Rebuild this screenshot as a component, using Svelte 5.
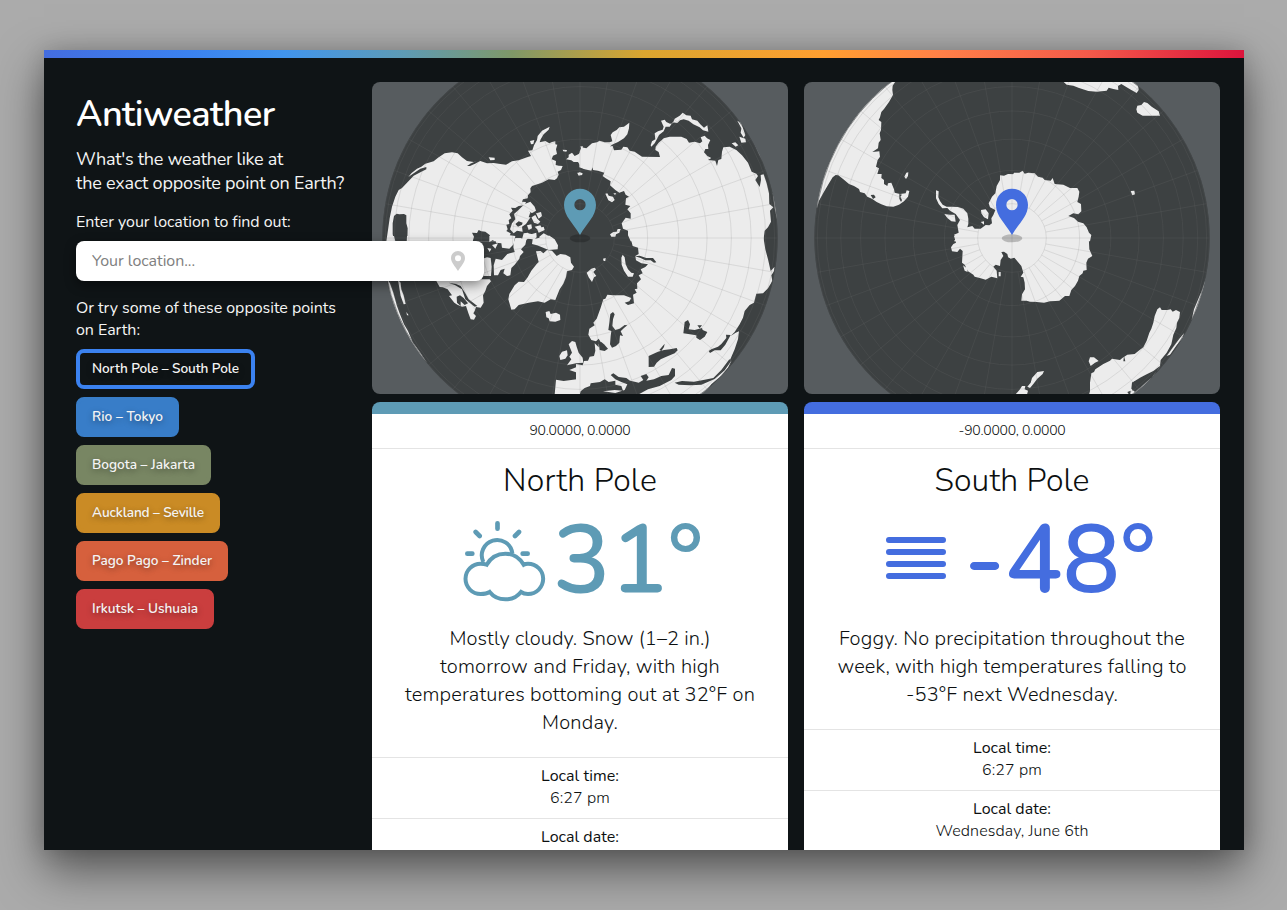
<script>
  const pairs = [
    { label: 'North Pole – South Pole', color: '#3b82f0', width: 147, active: true },
    { label: 'Rio – Tokyo', color: '#387dc8', width: 71 },
    { label: 'Bogota – Jakarta', color: '#788663', width: 103 },
    { label: 'Auckland – Seville', color: '#ca8b25', width: 112 },
    { label: 'Pago Pago – Zinder', color: '#d6603d', width: 120 },
    { label: 'Irkutsk – Ushuaia', color: '#ca3e3e', width: 106 }
  ];

  // Each quadrant is drawn in its own 3x coordinate frame, then moved into place.
  const frames = { nw: [0, -6], ne: [618, -6], sw: [0, 462], se: [618, 462] };

  const north = {
    nw: {
      land: [
        'M43 484L48 450 53 415 60 380 70 350 80 330 90 324 110 303 125 287 148 275 163 268 163 261 145 266 125 280 109 291 118 280 135 266 148 260 160 251 185 244 198 233 218 220 240 217 257 220 270 232 285 243 305 246 325 243 345 250 365 249 385 252 402 254 420 244 440 241 465 232 477 228 468 212 481 211 486 196 495 180 497 168 510 152 533 140 530 149 515 163 506 178 503 187 520 183 532 190 540 186 550 184 550 193 556 194 552 208 555 222 543 227 539 238 552 243 551 255 560 257 572 258 567 270 557 275 560 284 555 295 548 300 530 298 510 308 480 318 475 325 476 337 468 346 467 355 453 358 450 365 462 366 458 376 440 378 430 384 417 383 422 392 412 403 418 415 410 420 412 432 403 434 407 448 403 453 416 460 412 470 400 484Z',
        'M458 372L475 365 488 380 492 392 480 400 472 394 480 405 470 420 462 432 450 440 452 455 435 452 425 460 414 448 420 430 430 418 426 402 437 392Z',
        'M492 400L507 396 510 408 500 416ZM478 412L490 405 496 416 505 425 498 432 486 428ZM465 436L478 433 480 445 470 450ZM488 440L505 436 510 445 500 452ZM455 460L468 458 475 470 460 482 450 478ZM480 462L493 458 494 472 484 480ZM502 470L515 460 530 468 543 475 540 484 505 484ZM495 446L515 440 518 450 500 458Z',
        'M350 232L368 233 368 240 355 241ZM474 183L487 180 484 192 477 193ZM572 209L585 210 583 215 574 214ZM582 238L590 232 590 224 600 218 608 228 620 222 628 212 636 208 636 266 628 262 618 246 605 246 598 241ZM616 282L622 277 632 280 630 286ZM624 200L632 198 632 208Z'
      ],
      water: [
        'M62 430L66 408 74 401 82 403 96 402 103 406 103 430 107 445 106 484 66 484 62 462Z',
        'M302 484L306 470 300 458 315 459 320 450 328 454 340 455 352 464 360 476 366 484Z',
        'M285 258L298 250 325 238 328 241 312 250 294 258Z',
        'M430 432L440 424 452 428 450 434 438 440ZM420 470L440 462 444 468 430 484ZM474 400L484 398 480 412 470 412Z'
      ]
    },
    ne: {
      land: [
        'M4 236L5 215 10 202 25 205 42 190 57 187 65 182 80 187 95 187 103 184 98 165 104 157 116 150 124 142 138 140 154 128 153 145 148 163 138 175 120 186 105 193 83 208 87 200 104 198 108 211 130 209 136 200 148 202 155 212 170 215 192 230 246 231 242 216 232 210 233 200 242 188 257 175 275 170 310 170 326 177 333 188 350 185 366 190 373 184 368 172 380 167 387 175 397 180 390 195 391 207 382 207 378 217 388 228 400 234 390 240 412 242 417 258 421 240 430 237 432 215 436 202 455 200 475 210 492 226 510 248 521 275 535 281 540 288 532 300 545 321 549 300 548 285 557 283 566 310 573 340 574 372 586 382 576 392 579 425 570 442 560 452 556 484 158 484 150 466 150 452 135 446 131 430 143 413 158 416 158 400 148 388 157 378 142 374 144 355 153 350 143 344 138 333 124 338 112 330 96 316 98 304 82 294 74 288 79 278 60 272 45 270 44 262 40 272 20 268 4 262Z',
        'M218 196L222 184 232 178 230 160 240 154 254 149 257 140 249 122 260 119 265 126 276 131 284 130 290 116 305 107 314 98 325 106 338 107 342 118 358 122 367 133 378 143 388 136 391 155 375 151 365 142 346 133 332 122 317 118 306 121 298 129 284 127 275 140 263 140 257 154 243 165 237 177 230 190 220 200Z',
        'M461 190L472 187 481 196 473 200ZM478 122L490 128 495 145 502 165 497 173 488 158 490 145ZM484 170L502 176 504 187 490 188ZM527 187L541 205 550 228 554 242 544 224ZM584 338L591 350 594 380 598 395 597 418 590 385Z',
        'M82 341L88 340 92 347 105 350 110 360 102 367 91 361ZM106 340L115 340 111 345ZM96 463L106 456 116 455 119 447 128 447 124 458 114 463 112 470 100 470ZM-2 278L10 278 10 285 2 287Z'
      ],
      water: []
    },
    sw: {
      land: [
        'M46 0L66 0 70 16 48 16 46 0ZM105 0L302 0 302 20 104 20Z',
        'M46 130L54 142 64 170 75 210 84 235 96 265 108 285 122 318 145 350 166 382 130 340 90 280 60 210Z',
        'M78 132L86 140 88 160 95 178 101 204 95 205 86 180ZM103 228L110 238 105 238Z',
        'M190 130L353 130 357 136 345 150 340 165 333 178 335 200 326 215 312 213 308 225 304 232 312 240 306 251 296 250 290 234 282 210 270 212 256 206 247 200 231 180 240 178 227 160 212 154 203 153Z',
        'M332 68L345 64 356 66 359 92 357 120 335 120Z',
        'M365 88L371 68 390 72 406 54 428 48 424 34 425 20 430 6 446 6 463 12 460 26 447 40 455 48 444 60 442 68 428 86 418 96 415 118 405 120 394 112 398 98 386 102 378 118 366 118Z',
        'M352 0L385 -6 430 0 425 25 412 38 390 35 388 22 372 20 370 8 352 18ZM360 27L378 22 370 38ZM346 36L358 38 353 48ZM467 -8L490 -4 490 8 508 4 530 12 530 -2 548 10 558 28 557 40 530 42 510 34 495 28 480 24 482 10 467 8Z',
        'M409 190L412 174 428 148 440 137 456 138 467 124 478 104 494 84 500 78 496 62 492 46 506 45 514 52 525 42 540 44 554 60 565 54 581 56 595 64 597 80 606 92 600 102 585 106 582 124 574 143 563 160 550 192 536 190 518 200 498 196 470 200 440 207 428 220 418 221Z',
        'M521 228L532 225 536 234 552 230 564 236 565 252 550 257 533 256 530 247 523 244ZM562 360L570 347 585 343 587 358 580 368 565 372ZM590 325L600 315 610 318 614 332 620 350 632 365 634 380 612 382 585 388 598 370 592 362 600 350Z',
        'M552 431L575 435 614 430 616 410 592 402 614 393 636 390 636 478 548 476Z'
      ],
      water: ['M230 140L252 144 266 150 280 172 290 190 316 210 308 212 280 190 270 160 250 148ZM254 182L264 178 275 186 288 202 278 207 266 196 266 210 255 200Z']
    },
    se: {
      land: [
        'M152 -4L160 15 164 30 180 35 182 54 172 60 174 73 190 82 210 85 202 93 188 100 194 112 182 118 189 130 177 142 178 158 170 160 176 170 165 176 168 202 150 207 140 200 154 196 160 186 138 178 105 178 88 176 82 188 76 190 68 215 56 248 46 260 50 268 34 278 31 296 40 312 54 316 62 308 72 325 62 324 62 334 50 322 52 344 48 360 35 362 30 374 18 375 14 388 -6 384 -6 480 375 480 400 445 430 420 450 395 460 375 456 372 470 340 480 310 483 286 473 290 458 300 470 288 485 265 495 245 500 225 515 207 528 200 535 173 555 172 570 157 583 135 580 118 588 106 590 92 578 105 570 70 562 40 555 -4Z',
        'M134 56L140 64 143 85 150 100 160 110 168 112 164 122 150 122 138 104 131 86 130 65ZM26 110L40 98 50 95 54 100 46 108 55 120 48 124 42 138 32 124ZM75 68L83 66 82 75 77 75Z'
      ],
      water: [
        'M97 234L105 228 110 235 105 250 103 270 112 282 125 278 140 267 148 268 138 276 128 286 135 300 126 298 124 320 114 330 102 335 96 325 98 300 100 285 91 282 94 260Z',
        'M62 322L70 318 78 325 90 338 80 345 65 342Z',
        'M320 258L330 252 336 265 332 280 350 282 372 276 374 282 388 288 380 302 366 312 355 305 355 298 316 292 318 275ZM358 268L372 268 365 277Z',
        'M212 360L230 352 240 347 258 342 276 340 296 336 299 343 290 352 265 362 248 370 236 380 228 392 212 393ZM244 342L260 323 258 333 250 345Z',
        'M4 480L8 466 20 456 36 450 38 442 66 438 80 430 92 438 112 434 112 446 130 450 135 464 110 462 75 466 112 471 140 462 148 445 130 438 112 430 98 417 106 412 122 423 145 426 156 434 170 437 182 440 196 432 188 420 205 414 212 424 205 434 228 430 250 420 272 417 282 396 291 398 291 420 280 432 245 450 210 460 184 474 182 480Z',
        'M290 440L312 435 348 437 376 432 406 426 430 402 454 370 460 374 440 403 410 429 370 446 338 448 302 446Z',
        'M392 345L400 340 420 332 430 324 445 306 444 296 458 297 442 326 428 343 410 343 396 351Z',
        'M171 61L185 59 205 66 225 66 235 79 228 80 218 73 202 73 188 66ZM75 440L84 444 82 464 74 460Z'
      ]
    }
  };

  const south = {
    nw: {
      land: [
        'M262 6L274 5 266 17 265 30 267 45 255 66 240 87 232 96 228 112 224 120 232 126 231 150 227 160 230 180 224 188 222 205 205 216 226 214 228 230 221 240 216 260 225 265 220 282 233 282 232 294 240 300 240 312 250 318 252 310 262 308 270 328 272 338 288 342 305 340 308 331 316 333 312 350 300 364 285 374 268 380 248 379 232 373 218 366 205 357 190 350 182 340 168 336 165 327 150 318 135 312 118 298 103 286 95 285 86 292 76 308 60 335 45 362 39 384 30 365 45 315 70 260 105 180 165 95 230 20Z',
        'M301 290L307 278 313 277 312 288 306 297ZM396 331L404 334 403 352 408 363 416 374 428 380 444 380 462 381 478 386 490 400 493 416 493 432 490 442 505 438 512 446 530 446 545 435 556 436 564 430 562 415 568 405 574 390 558 382 554 370 564 350 574 340 578 318 588 300 588 286 600 287 612 282 636 283 636 484 450 484 456 474 450 464 464 458 460 435 468 420 455 402 438 392 430 384 415 385 404 372 396 355ZM421 402L438 404 452 404 455 425 442 424 430 414ZM531 390L545 388 554 400 552 418 540 412 532 400ZM530 426L540 424 540 434Z'
      ],
      water: ['M200 345L210 344 215 352 207 357Z', 'M286 342L294 344 289 350 294 360 291 366 286 356Z']
    },
    ne: {
      land: [
        'M-4 283L8 286 12 278 28 278 38 272 44 281 55 278 74 280 84 290 98 293 104 300 122 302 128 294 134 312 160 314 180 324 202 324 208 335 206 350 202 366 213 372 214 394 205 403 190 400 175 408 192 414 204 425 220 430 230 442 237 458 244 465 240 484-4 484Z',
        'M160 5L374 5 384 14 386 30 380 39 364 30 350 22 334 12 324 18 325 30 310 27 296 23 290 32 260 35 235 33 205 23 190 17 170 14ZM379 88L382 77 394 75 402 66 412 69 425 80 446 94 450 107 420 107 398 107 382 98ZM362 333L373 332 375 343 367 346Z'
      ],
      water: []
    },
    sw: {
      land: ['M450 0L636 0 636 64 620 68 612 62 610 54 600 47 592 48 598 60 590 72 588 90 575 86 568 92 578 104 580 127 562 122 545 131 530 127 512 122 508 116 492 106 482 86 474 80 476 45 468 38 460 48 444 46 441 34 448 24 456 20ZM477 88L488 96 491 108 482 104ZM584 108L590 108 590 121 584 121Z'],
      water: []
    },
    se: {
      land: [
        'M-4 0L236 0 238 40 247 60 234 68 229 80 230 102 220 104 218 112 208 120 204 134 195 150 184 162 178 180 165 180 148 194 136 195 120 196 102 200 80 198 60 197 50 194 34 194 36 175 45 160 44 140 40 124 32 122 40 110 34 90 22 76 12 64-4 66Z',
        'M434 240L442 220 450 214 455 222 472 222 482 220 488 227 498 222 510 228 508 246 501 260 499 276 490 296 484 325 470 350 452 372 450 390 430 405 410 415 390 425 366 440 364 458 375 468 430 420 455 385 445 400 380 480 236 480 240 465 240 440 244 412 252 408 256 400 280 384 300 374 306 368 330 372 337 366 352 356 374 354 386 344 400 334 410 314 418 290 424 278 430 260Z',
        'M236 376L240 364 252 364 266 375 255 380 242 390ZM52 452L62 440 66 426 82 408 102 405 98 414 82 428 70 444 60 456ZM16 476L30 460 36 450 46 450 44 460 54 464 50 480ZM588 126L584 155 570 200 545 252 552 220 575 165ZM522 292L518 306 500 328 480 356 470 360 490 332 508 308Z'
      ],
      water: ['M342 360L346 376 340 376ZM366 440L388 430 412 418 410 428 380 448 368 466ZM352 468L362 464 360 480Z']
    }
  };

  const rings = [10, 20, 30, 40, 50, 60, 70, 80].map((a) => 593 * Math.sin((a * Math.PI) / 180));
  const rays = Array.from({ length: 36 }, (_, i) => {
    const a = (i * Math.PI) / 18;
    const r = i % 9 === 0 ? 0 : 103;
    return {
      x1: 624 + r * Math.cos(a), y1: 468 + r * Math.sin(a),
      x2: 624 + 593 * Math.cos(a), y2: 468 + 593 * Math.sin(a)
    };
  });

  const places = [
    {
      id: 'n', map: north, color: '#5e9bb5', coords: ['90.0000, 0.0000', 101],
      name: ['North Pole', 154], icon: 'cloud-sun', temp: ['31°', 150],
      text: [['Mostly cloudy. Snow (1–2 in.)', 261], ['tomorrow and Friday, with high', 280], ['temperatures bottoming out at 32°F on', 350], ['Monday.', 76]],
      time: ['6:27 pm', 60], date: ['Wednesday, June 6th', 153]
    },
    {
      id: 's', map: south, color: '#446ddf', coords: ['-90.0000, 0.0000', 107],
      name: ['South Pole', 155], icon: 'fog', temp: ['-48°', 192],
      text: [['Foggy. No precipitation throughout the', 346], ['week, with high temperatures falling to', 349], ['-53°F next Wednesday.', 212]],
      time: ['6:27 pm', 60], date: ['Wednesday, June 6th', 153]
    }
  ];

  // Tracks a line of text out to the given measure.
  function fit(node, width) {
    node.style.letterSpacing = '0px';
    const natural = node.getBoundingClientRect().width;
    node.style.letterSpacing = (width - natural) / [...node.textContent].length + 'px';
  }
</script>

<div class="window">
  <div class="rainbow"></div>
  <div class="layout">
    <aside>
      <h1><span class="fit" use:fit={198.5}>Antiweather</span></h1>
      <p class="lead">
        <span class="fit" use:fit={207}>What's the weather like at</span><br />
        <span class="fit" use:fit={268}>the exact opposite point on Earth?</span>
      </p>
      <p class="prompt"><span class="fit" use:fit={214.5}>Enter your location to find out:</span></p>
      <div class="search">
        <span class="fit" use:fit={103}>Your location...</span>
        <svg width="14" height="20" viewBox="0 0 14 20"><path fill-rule="evenodd" d="M7 0a7 7 0 0 1 7 7c0 4.500-4 8-7 13C4 15 0 11.500 0 7a7 7 0 0 1 7-7zM7 4.200a3 3 0 1 0 0 6 3 3 0 0 0 0-6z" fill="#ccc" /></svg>
      </div>
      <p class="try">
        <span class="fit" use:fit={260}>Or try some of these opposite points</span><br />
        <span class="fit" use:fit={64}>on Earth:</span>
      </p>
      <div class="pairs">
        {#each pairs as p}
          <button class:active={p.active} style="--c: {p.color}"><span class="fit" use:fit={p.width}>{p.label}</span></button>
        {/each}
      </div>
    </aside>

    {#each places as p}
      <section style="--c: {p.color}">
        <svg class="map" viewBox="0 0 1248 936">
          <defs>
            <clipPath id="globe-{p.id}"><circle cx="624" cy="468" r="593" /></clipPath>
          </defs>
          <rect width="1248" height="936" fill="#575c5f" />
          <circle cx="624" cy="468" r="593" fill="#3d4142" />
          <g clip-path="url(#globe-{p.id})">
            {#each Object.entries(frames) as [k, [x, y]]}
              <g transform="translate({x} {y})">
                {#each p.map[k].land as d}<path {d} fill="#ececec" />{/each}
                {#each p.map[k].water as d}<path {d} fill="#3d4142" />{/each}
              </g>
            {/each}
          </g>
          <g fill="none" stroke="#777" stroke-opacity=".17" stroke-width="3">
            {#each rings as r}<circle cx="624" cy="468" {r} />{/each}
            {#each rays as r}<line {...r} />{/each}
          </g>
          <circle cx="624" cy="468" r="592" fill="none" stroke="#474b4d" stroke-width="3" stroke-opacity=".6" />
          <ellipse cx="624" cy="469" rx="31" ry="12" fill="#000" fill-opacity=".22" />
          <path fill-rule="evenodd" fill={p.color} d="M624 320c27 0 48 21 48 49 0 34-28 55-48 90-20-35-48-56-48-90 0-28 21-49 48-49zM624 351a17 17 0 1 0 0 34 17 17 0 0 0 0-34z" />
        </svg>
        <article>
          <div class="coords"><span class="fit" use:fit={p.coords[1]}>{p.coords[0]}</span></div>
          <h2><span class="fit" use:fit={p.name[1]}>{p.name[0]}</span></h2>
          <div class="now">
            <div class="icon">
              {#if p.icon === 'fog'}
                <svg class="fog" width="60" height="42" viewBox="0 0 60 42" stroke="currentColor" stroke-width="6" stroke-linecap="round"><path d="M3 3h54M3 15h54M3 27h54M3 39h54" /></svg>
              {:else}
                <svg width="80" height="80" viewBox="75 363 240 240" fill="none" stroke="currentColor" stroke-width="12">
                  <path d="M130 486A46 46 0 1 1 217 460" />
                  <path d="M140 494C132 491 126 491 122 491A45 45 0 0 0 122 582C132 582 141 581 149 576C160 590 176 598 196 598S232 590 243 576C250 581 257 582 264 582A45 45 0 0 0 264 491C260 491 256 491 251 494C238 473 219 461 196 461S152 473 140 494z" />
                  <path stroke-linecap="round" stroke-width="14" d="M172.500 370v16M107 396l12 12M237 396l-12 12M82 461h15M248 461h15" />
                </svg>
              {/if}
            </div>
            <div class="temp"><span class="fit" use:fit={p.temp[1]}>{p.temp[0]}</span></div>
          </div>
          <div class="summary">
            {#each p.text as [line, w]}<div><span class="fit" use:fit={w}>{line}</span></div>{/each}
          </div>
          <dl><dt><span class="fit" use:fit={78}>Local time:</span></dt><dd><span class="fit" use:fit={p.time[1]}>{p.time[0]}</span></dd></dl>
          <dl><dt><span class="fit" use:fit={78}>Local date:</span></dt><dd><span class="fit" use:fit={p.date[1]}>{p.date[0]}</span></dd></dl>
        </article>
      </section>
    {/each}
  </div>
</div>

<style>
  :global(body) { background: #ababab; height: 910px; overflow: hidden; font-family: Nunito, Lato, sans-serif; }
  .window { box-sizing: border-box; width: 1200px; height: 800px; margin: 50px 43px 60px 44px; background: #0f1416; overflow: hidden; box-shadow: 0 20px 44px rgba(0, 0, 0, .5), 0 0 22px rgba(0, 0, 0, .15); }
  :global(#app) { display: flow-root; }
  .rainbow { height: 8px; background: linear-gradient(90deg, #446ddf 0%, #3b82f0 12%, #4195ee 20%, #5e9bb5 30%, #7f9868 39%, #daa52f 50%, #ff9f30 65%, #ff7f48 75%, #f45a4a 87%, #dc143c 100%); }
  .layout { display: flex; gap: 16px; height: 792px; }
  aside { position: relative; z-index: 2; box-sizing: border-box; width: 312px; padding: 33px 0 0 32px; color: #f4f4f4; flex: none; }
  h1, h2, p, dl, dd { margin: 0; font-weight: 400; }
  .fit { display: inline-block; white-space: nowrap; }
  h1 { font-size: 36px; line-height: 48px; font-weight: 600; color: #fff; }
  .lead { margin-top: 8px; font-size: 18px; line-height: 24px; white-space: nowrap; }
  .prompt { margin-top: 16px; font-size: 16px; line-height: 22px; }
  .search { display: flex; box-sizing: border-box; justify-content: space-between; align-items: center; width: 408px; height: 40px; margin-top: 8px; padding: 0 19px 0 16px; border-radius: 8px; background: #fff; color: #808080; font-size: 16px; box-shadow: 0 4px 12px rgba(0, 0, 0, .45); }
  .try { margin-top: 16px; font-size: 16px; line-height: 22px; }
  .pairs { display: flex; flex-direction: column; align-items: flex-start; gap: 8px; margin-top: 8px; }
  button { box-sizing: border-box; height: 40px; padding: 0 12px 2px; border: 4px solid var(--c); border-radius: 8px; background: var(--c); color: #f4f4f4; font: 600 13.6px Nunito, Lato, sans-serif; text-shadow: 0 2px 6px rgba(0, 0, 0, .4); }
  button.active { background: #0f1416; }
  section { width: 416px; padding-top: 24px; flex: none; }
  .map { display: block; width: 416px; height: 312px; border-radius: 8px; }
  article { height: 500px; margin-top: 8px; border-top: 12px solid var(--c); border-radius: 8px 8px 0 0; background: #fff; color: #0c0f10; text-align: center; }
  .coords { border-bottom: 1px solid #e4e4e4; font-size: 14px; line-height: 34px; font-weight: 300; }
  h2 { margin-top: 12px; font-size: 32px; line-height: 40px; font-weight: 300; }
  .now { display: flex; justify-content: center; height: 96px; margin-top: 12px; color: var(--c); }
  .icon { display: flex; width: 96px; height: 96px; align-items: center; justify-content: center; }
  .icon svg { display: block; overflow: visible; }
  .icon .fog { margin-bottom: 6px; }
  .temp { font-size: 96px; line-height: 96px; font-weight: 650; }
  .summary { padding-bottom: 20px; margin-top: 16px; font-size: 20px; line-height: 28px; font-weight: 300; }
  dl { padding: 7px 0 9px; border-top: 1px solid #e4e4e4; font-size: 16px; line-height: 22px; }
  dd { font-weight: 300; }
</style>
